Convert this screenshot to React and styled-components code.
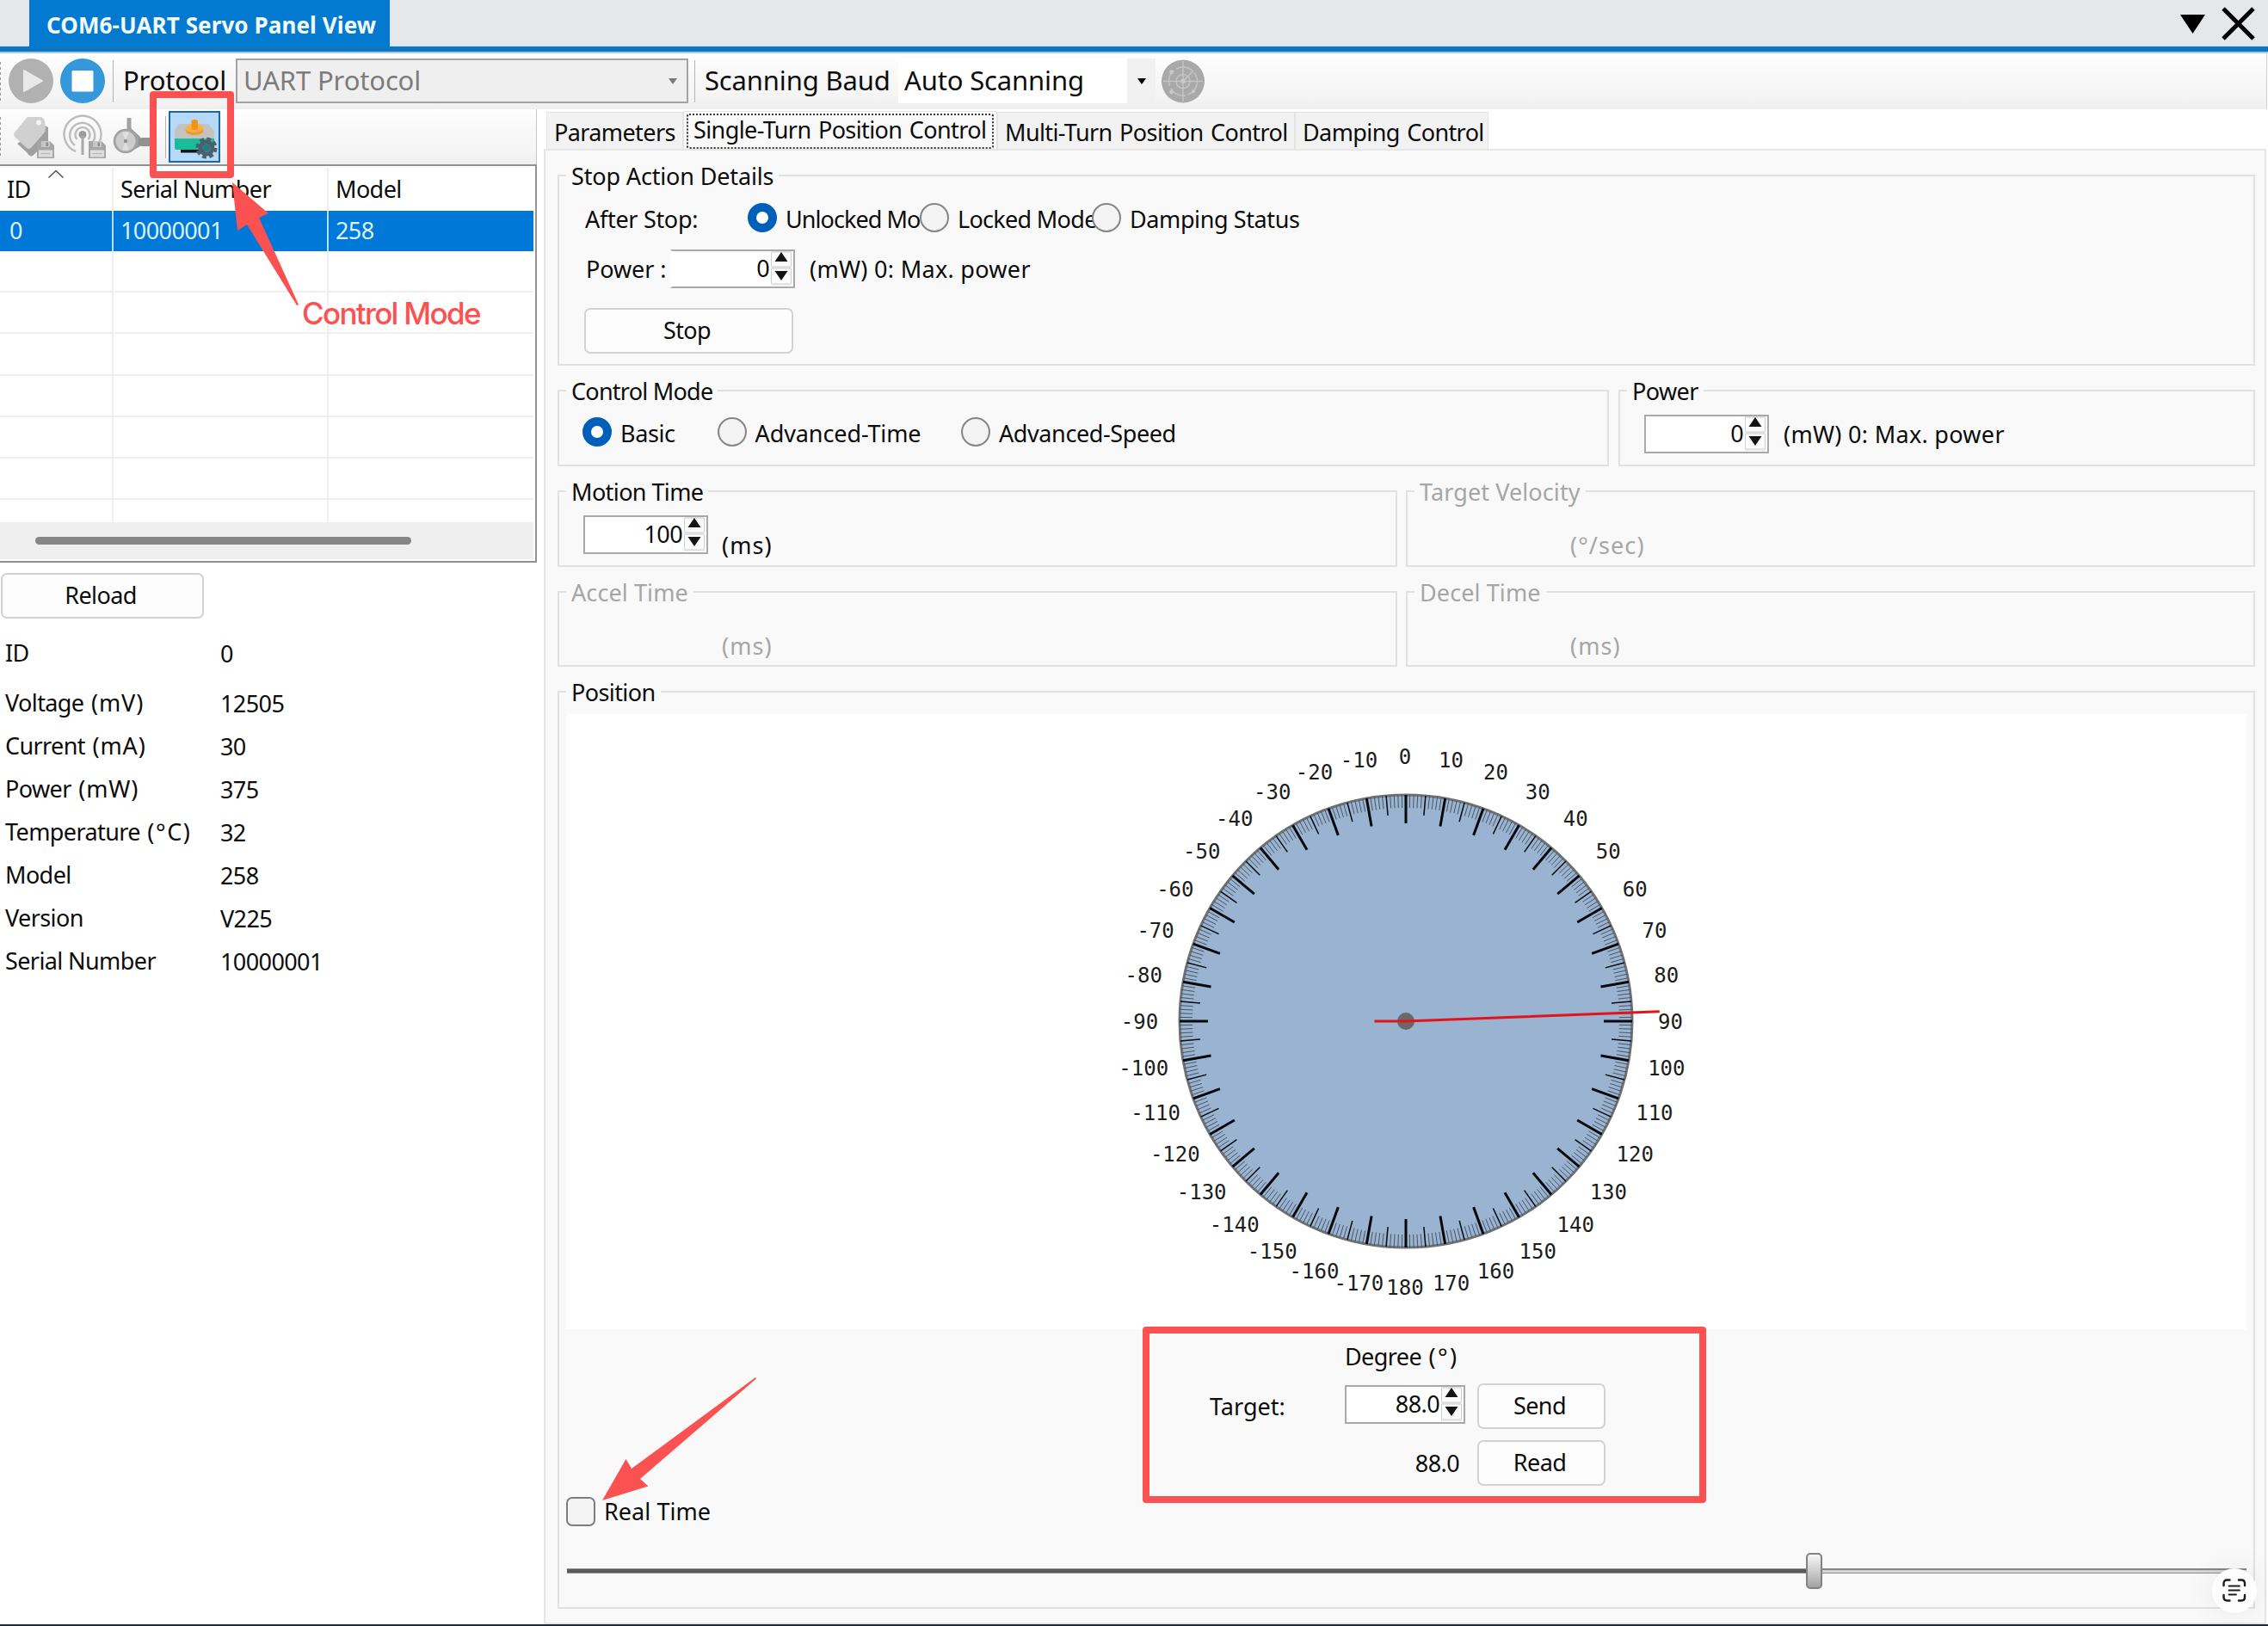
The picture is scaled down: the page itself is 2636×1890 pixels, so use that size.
import React from "react";
import styled, { createGlobalStyle } from "styled-components";

const GlobalStyle = createGlobalStyle`
  * {
    box-sizing: border-box;
  }

  body {
    margin: 0;
    background: #ffffff;
    color: #0c0c0c;
    font-family: "Noto Sans", "Open Sans", sans-serif;
    font-size: 27px;
    letter-spacing: -0.6px;
    line-height: 36px;
    white-space: nowrap;
  }
`;

const deviceInfo = [
  { label: "Voltage", unit: "(mV)", value: "12505" },
  { label: "Current", unit: "(mA)", value: "30" },
  { label: "Power", unit: "(mW)", value: "375" },
  { label: "Temperature", unit: "(°C)", value: "32", spacing: 1.6 },
  { label: "Model", value: "258" },
  { label: "Version", value: "V225" },
  { label: "Serial Number", value: "10000001" },
];

const CX = 976;
const CY = 357;

// point on the dial, 0 degrees at the top and clockwise
const polar = (deg, r) => {
  const a = (deg * Math.PI) / 180;
  return [CX + Math.sin(a) * r, CY - Math.cos(a) * r];
};

const Tick = ({ deg }) => {
  const major = deg % 10 === 0;
  const medium = deg % 5 === 0;
  const inner = major ? 230 : medium ? 240 : 248;
  const [x1, y1] = polar(deg, 263);
  const [x2, y2] = polar(deg, inner);
  return (
    <line
      x1={x1}
      y1={y1}
      x2={x2}
      y2={y2}
      stroke={major || medium ? "#05080c" : "#3f4b58"}
      strokeWidth={major ? 3 : medium ? 1.5 : 0.9}
    />
  );
};

const Dial = ({ value }) => {
  const ticks = Array.from({ length: 360 }, (_, i) => i);
  const labels = Array.from({ length: 36 }, (_, i) => (i - 17) * 10);
  const [nx, ny] = polar(value - 0.2, 295);
  return (
    <DialCanvas viewBox="0 0 1953 715">
      <circle cx={CX} cy={CY} r="263" fill="#99b3d1" stroke="#6f7275" strokeWidth="3" />
      {ticks.map((deg) => (
        <Tick key={deg} deg={deg} />
      ))}
      {labels.map((deg) => {
        const [x, y] = polar(deg, 308.5);
        return (
          <DialLabel key={deg} x={x - 1} y={y + 9}>
            {deg}
          </DialLabel>
        );
      })}
      <circle cx={CX} cy={CY} r="10" fill="#696969" />
      <path d={`M939.5 ${CY}H${CX}L${nx} ${ny}`} fill="none" stroke="#e3131b" strokeWidth="3" />
    </DialCanvas>
  );
};

const Spin = ({ value, width, open }) => (
  <SpinBox $width={width} $open={open}>
    <span>{value}</span>
    <SpinButtons viewBox="0 0 24 40">
      <rect x="0.5" y="1" width="23" height="17" rx="1" fill="#fbfbfb" stroke="#cfcfcf" />
      <rect x="0.5" y="20" width="23" height="18" rx="1" fill="#fbfbfb" stroke="#cfcfcf" />
      <path d="M12 1L19.5 12H4.5Z" fill="#141414" />
      <path d="M12 34L4.5 23H19.5Z" fill="#141414" />
    </SpinButtons>
  </SpinBox>
);

const Radio = ({ label, checked, width, spacing }) => (
  <RadioItem $width={width} $spacing={spacing}>
    <RadioDot $checked={checked} />
    <span>{label}</span>
  </RadioItem>
);

const PlayIcon = () => (
  <svg width="52" height="52" viewBox="0 0 52 52">
    <circle cx="26" cy="26" r="26" fill="#b1b1b1" />
    <path d="M18 14L39 26L18 38Z" fill="#e9e9e9" stroke="#e9e9e9" strokeWidth="2" strokeLinejoin="round" />
  </svg>
);

const StopIcon = () => (
  <svg width="52" height="52" viewBox="0 0 52 52">
    <circle cx="26" cy="26" r="26" fill="#3498db" />
    <rect x="13.5" y="14" width="25" height="24.5" rx="1.5" fill="#ffffff" />
  </svg>
);

const RadarIcon = () => (
  <svg width="50" height="51" viewBox="0 0 50 51">
    <circle cx="25" cy="25.5" r="25" fill="#a9a9a9" />
    <g fill="none" stroke="#c4c4c4" strokeWidth="1.5">
      <circle cx="25" cy="25.5" r="8" />
      <circle cx="25" cy="25.5" r="16.5" strokeDasharray="20 3" />
      <path d="M25 2V49M2 25.5H48M25 25.5L37 13" />
    </g>
    <g fill="#c9c9c9">
      <circle cx="25" cy="25.5" r="2.8" />
      <circle cx="11.5" cy="15" r="2.4" />
      <circle cx="11.5" cy="38" r="2.4" />
      <circle cx="37" cy="37" r="2" />
    </g>
  </svg>
);

const Floppy = ({ x, y }) => (
  <g transform={`translate(${x} ${y})`}>
    <path d="M0 0H15L20 5V20H0Z" fill="#a6a6a6" />
    <rect x="5" y="0" width="10" height="7" fill="#c6c6c6" />
    <rect x="10.5" y="1.5" width="2.5" height="4.5" fill="#8f8f8f" />
    <rect x="2" y="10.5" width="16" height="8" fill="#dddddd" />
    <path d="M4.5 14.5H15.5" stroke="#b8b8b8" strokeWidth="1.2" />
  </g>
);

const TagIcon = () => (
  <svg width="52" height="54" viewBox="14 134 52 54">
    <path d="M52 147L56 149V165L38 182Q35 184 31 178L20 168Z" fill="#a0a0a0" />
    <path
      d="M33 137L46 137Q51 137 52 142L53 150Q53 154 50 157L36 173Q34 175 31 173L18 161Q15 158 17 155L30 139Q31 137 33 137Z"
      fill="#d0d0d0"
    />
    <circle cx="45" cy="143.5" r="3" fill="#f4f4f4" />
    <Floppy x={43} y={165} />
  </svg>
);

const AntennaIcon = () => (
  <svg width="54" height="54" viewBox="72 134 54 54">
    <g fill="none" stroke="#bdbdbd" strokeWidth="2.5">
      <path d="M88 177A21.5 21.5 0 1 1 116 165" />
      <path d="M87 170A14.5 14.5 0 1 1 108 166" />
      <path d="M89.500 163A8.5 8.5 0 1 1 102.500 163" />
    </g>
    <circle cx="96" cy="157.5" r="4.5" fill="#9c9c9c" />
    <path d="M96 158V181" stroke="#a9a9a9" strokeWidth="3" />
    <Floppy x={103} y={165} />
  </svg>
);

const CaliperIcon = () => (
  <svg width="50" height="54" viewBox="130 134 50 54">
    <rect x="147.5" y="138" width="5" height="14" fill="#a3a3a3" />
    <path d="M152 150L163 160V171L152 177Z" fill="#9b9b9b" />
    <rect x="161" y="161" width="18" height="10" rx="4" fill="#929292" />
    <circle cx="146" cy="165" r="14.3" fill="#a2a2a2" />
    <circle cx="146" cy="165" r="11.5" fill="#cccccc" />
    <path d="M146 165L142 154.5L150 154.5Z M146 165L142 175.5L150 175.5Z" fill="#dfdfdf" />
    <circle cx="146" cy="165" r="2.2" fill="#8f8f8f" />
  </svg>
);

const ServoIcon = () => (
  <svg width="54" height="54" viewBox="199 132 54 54">
    <path d="M208 144H242L249 152V162H203V152Z" fill="#c5c3bf" />
    <path d="M203 161H249V172Q249 174 247 174H205Q203 174 203 172Z" fill="#1abc9c" />
    <rect x="210" y="174" width="27" height="3.5" fill="#101418" />
    <ellipse cx="226" cy="151.5" rx="10.5" ry="5.5" fill="#f09a2c" />
    <ellipse cx="226" cy="149" rx="10.5" ry="5" fill="#fbb04c" />
    <rect x="222.5" y="139" width="7.5" height="12" rx="2.5" fill="#f39312" />
    <circle cx="240" cy="172" r="10" fill="none" stroke="#4d5f6e" strokeWidth="5" strokeDasharray="4.6 3.254" />
    <circle cx="240" cy="172" r="7" fill="none" stroke="#4d5f6e" strokeWidth="5" />
    <circle cx="240" cy="172" r="4.5" fill="#2c7a7b" />
  </svg>
);

const ScanTextIcon = () => (
  <svg width="28" height="28" viewBox="0 0 28 28" fill="none" stroke="#1d1d1f" strokeLinecap="round">
    <path
      d="M1.5 8V5.5Q1.5 1.5 5.5 1.5H8.5M19 1.5H22Q26 1.5 26 5.5V8M26 19V21.5Q26 25.5 22 25.5H19M8.5 25.5H5.5Q1.5 25.5 1.5 21.5V19"
      strokeWidth="2.4"
    />
    <path d="M7.5 8.5H20M7.5 13.5H20M7.5 18.5H16" strokeWidth="1.8" />
  </svg>
);

const App = () => {
  return (
    <Window>
      <GlobalStyle />
      <TitleBar>
        <TitleTab>COM6-UART Servo Panel View</TitleTab>
        <WindowActions width="92" height="54" viewBox="0 0 92 54">
          <path d="M1 17H30L15.5 39Z" fill="#000000" />
          <path d="M51 10L86 45M86 10L51 45" stroke="#000000" strokeWidth="5" />
        </WindowActions>
      </TitleBar>

      <MainToolbar>
        <Grip />
        <PlayIcon />
        <StopIcon />
        <Separator />
        <ToolLabel $width={142}>Protocol</ToolLabel>
        <Combo $width={526} $disabled>
          <span>UART Protocol</span>
          <ComboArrow $disabled />
        </Combo>
        <Separator />
        <ToolLabel $width={236}>Scanning Baud</ToolLabel>
        <Combo $width={299}>
          <span>Auto Scanning</span>
          <ComboArrow />
        </Combo>
        <RadarIcon />
      </MainToolbar>

      <Body>
        <Sidebar>
          <SideToolbar>
            <Grip />
            <TagIcon />
            <AntennaIcon />
            <CaliperIcon />
            <Separator />
            <ActiveTool>
              <ServoIcon />
            </ActiveTool>
          </SideToolbar>

          <Table>
            <HeadRow>
              <Cell>
                ID
                <SortCaret viewBox="0 0 20 11">
                  <path d="M1.5 9.5L10 1.5L18.5 9.5" fill="none" stroke="#555555" strokeWidth="1.6" />
                </SortCaret>
              </Cell>
              <Cell>Serial Number</Cell>
              <Cell>Model</Cell>
            </HeadRow>
            <SelectedRow>
              <Cell>0</Cell>
              <Cell>10000001</Cell>
              <Cell>258</Cell>
            </SelectedRow>
            {[0, 1, 2, 3, 4, 5].map((i) => (
              <EmptyRow key={i}>
                <Cell />
                <Cell />
                <Cell />
              </EmptyRow>
            ))}
            <LastRow>
              <Cell />
              <Cell />
              <Cell />
            </LastRow>
            <ScrollTrack>
              <ScrollThumb />
            </ScrollTrack>
          </Table>

          <ReloadButton>Reload</ReloadButton>

          <InfoList>
            <InfoRow $height={58}>
              <span>ID</span>
              <InfoValue>0</InfoValue>
            </InfoRow>
            {deviceInfo.map(({ label, unit, value, spacing }) => (
              <InfoRow key={label}>
                <span>
                  {label} {unit && <InfoUnit $spacing={spacing}>{unit}</InfoUnit>}
                </span>
                <InfoValue>{value}</InfoValue>
              </InfoRow>
            ))}
          </InfoList>
        </Sidebar>

        <Main>
          <TabBar>
            <Tab $width={159}>Parameters</Tab>
            <Tab $width={365} $active>
              <TabFocus>Single-Turn Position Control</TabFocus>
            </Tab>
            <Tab $width={346}>Multi-Turn Position Control</Tab>
            <Tab $width={225}>Damping Control</Tab>
          </TabBar>

          <Pane>
            <Group $height={222}>
              <Legend $spacing={-0.15}>Stop Action Details</Legend>
              <StopRow>
                <StopLabel>After Stop:</StopLabel>
                <Radio label="Unlocked Mo" width={200} spacing={-0.95} checked />
                <Radio label="Locked Mode" width={200} spacing={-0.7} />
                <Radio label="Damping Status" width={260} spacing={-0.4} />
              </StopRow>
              <PowerRow>
                <PowerLabel>Power :</PowerLabel>
                <Spin value="0" width={145} open />
                <Unit>(mW) 0: Max. power</Unit>
              </PowerRow>
              <StopButton>Stop</StopButton>
            </Group>

            <GroupRow $columns="1222px 740px" $gap={11}>
              <Group $height={89}>
                <Legend $spacing={-0.75}>Control Mode</Legend>
                <ModeRow>
                  <Radio label="Basic" width={156.5} spacing={-0.4} checked />
                  <Radio label="Advanced-Time" width={283.5} spacing={-0.1} />
                  <Radio label="Advanced-Speed" width={300} spacing={-0.4} />
                </ModeRow>
              </Group>
              <Group $height={89}>
                <Legend>Power</Legend>
                <PowerField>
                  <Spin value="0" width={145} />
                  <Unit>(mW) 0: Max. power</Unit>
                </PowerField>
              </Group>
            </GroupRow>

            <GroupRow $columns="976px 987px" $gap={10}>
              <Group $height={89}>
                <Legend>Motion Time</Legend>
                <TimeField>
                  <SpinSlot>
                    <Spin value="100" width={145} />
                  </SpinSlot>
                  <LowUnit>(ms)</LowUnit>
                </TimeField>
              </Group>
              <Group $height={89} $disabled>
                <Legend $spacing={0.1}>Target Velocity</Legend>
                <TimeField>
                  <SpinSlot />
                  <LowUnit>(°/sec)</LowUnit>
                </TimeField>
              </Group>
            </GroupRow>

            <GroupRow $columns="976px 987px" $gap={10}>
              <Group $height={88} $disabled>
                <Legend $spacing={0.1}>Accel Time</Legend>
                <TimeField>
                  <SpinSlot />
                  <LowUnit>(ms)</LowUnit>
                </TimeField>
              </Group>
              <Group $height={88} $disabled>
                <Legend $spacing={0.1}>Decel Time</Legend>
                <TimeField>
                  <SpinSlot />
                  <LowUnit>(ms)</LowUnit>
                </TimeField>
              </Group>
            </GroupRow>

            <Group $height={1067}>
              <Legend>Position</Legend>
              <Dial value={88} />
              <TargetGrid>
                <DegreeTitle>
                  Degree <DegreeUnit>(°)</DegreeUnit>
                </DegreeTitle>
                <TargetLabel>Target:</TargetLabel>
                <Spin value="88.0" width={140} />
                <PushButton>Send</PushButton>
                <ReadValue>88.0</ReadValue>
                <PushButton>Read</PushButton>
              </TargetGrid>
              <RealTime>
                <Checkbox />
                Real Time
              </RealTime>
              <Slider>
                <SliderFill />
                <SliderThumb />
                <SliderRest />
              </Slider>
            </Group>
          </Pane>
        </Main>
      </Body>

      <ScanBadge>
        <ScanTextIcon />
      </ScanBadge>
      <ToolMarker />
      <TargetMarker />
      <Arrows viewBox="0 0 2636 1890">
        <path d="M270 212L312 248L301 253L347 354L345 355L287 261L276 268Z" />
        <path d="M700 1744L727.5 1696L734 1707L878 1601L879 1602.5L744 1719L753.5 1727.5Z" />
      </Arrows>
      <MarkerText>Control Mode</MarkerText>
    </Window>
  );
};

const Window = styled.div`
  position: relative;
  display: flex;
  flex-direction: column;
  width: 2636px;
  height: 1890px;
  overflow: hidden;
  background: #ffffff;
  border-bottom: 2px solid #222a33;
`;

const TitleBar = styled.header`
  display: flex;
  justify-content: space-between;
  height: 62px;
  padding-left: 34px;
  background: linear-gradient(#e6e7eb 52px, #c8e8fa 52px 54px, #1374bd 54px 60px, #9fcdee 60px);
`;

const TitleTab = styled.div`
  width: 419px;
  height: 56px;
  padding: 11px 0 0 20px;
  background: #037ad0;
  color: #f2fbff;
  font-size: 26px;
  font-weight: 700;
  letter-spacing: 0.1px;
`;

const WindowActions = styled.svg`
  margin-right: 11px;
`;

const MainToolbar = styled.div`
  display: flex;
  align-items: center;
  width: 2635px;
  height: 65px;
  background: linear-gradient(#ffffff, #f8f8f8 40%, #f5f5f5 75%, #efefef);
  border-right: 1px solid #d0d0d0;
  font-size: 31px;
  letter-spacing: -0.15px;

  svg {
    flex: none;
    margin-bottom: 1px;
  }

  svg:nth-of-type(2) {
    margin: 0 9px 1px 8px;
  }
`;

const Grip = styled.div`
  width: 1px;
  height: 46px;
  margin-right: 9px;
  background: repeating-linear-gradient(#9a9a9a 0 3px, transparent 3px 6px);
`;

const Separator = styled.div`
  flex: none;
  width: 1px;
  height: 49px;
  background: #b4b4b4;
`;

const ToolLabel = styled.span`
  flex: none;
  width: ${(p) => p.$width}px;
  padding: 0 0 3px 11px;
`;

const Combo = styled.div`
  display: flex;
  align-items: center;
  justify-content: space-between;
  flex: none;
  width: ${(p) => p.$width}px;
  height: 52px;
  padding-left: 7px;
  margin: 0 7px 1px 0;
  background: ${(p) => (p.$disabled ? "#efefef" : "#ffffff")};
  color: ${(p) => (p.$disabled ? "#7c7c7c" : "#0c0c0c")};
  border: ${(p) => (p.$disabled ? "2px solid #a3a3a3" : "none")};

  > span:first-child {
    padding-bottom: 2px;
  }
`;

const ComboArrow = styled.span`
  display: flex;
  align-items: center;
  justify-content: center;
  width: 33px;
  height: 100%;
  background: ${(p) => (p.$disabled ? "transparent" : "#f1f1f1")};

  &::before {
    content: "";
    border: 5px solid transparent;
    border-top: 7px solid ${(p) => (p.$disabled ? "#7a7a7a" : "#000000")};
    border-bottom: none;
  }
`;

const Body = styled.div`
  display: flex;
  flex: 1;
`;

const Sidebar = styled.aside`
  width: 632px;
`;

const SideToolbar = styled.div`
  display: flex;
  align-items: center;
  width: 624px;
  height: 64px;
  background: linear-gradient(#fefefe, #f8f8f8 40%, #f5f5f5 75%, #efefef);
  border-right: 1px solid #c8c8c8;

  svg {
    flex: none;
  }

  > svg {
    margin-top: 2px;
  }

  > svg:nth-of-type(1) {
    margin: 2px 6px 0 4px;
  }

  > svg:nth-of-type(3) {
    margin: 2px 12px 0 4px;
  }
`;

const ActiveTool = styled.div`
  display: flex;
  align-items: center;
  justify-content: center;
  width: 60px;
  height: 60px;
  margin-left: 3px;
  background: #b5d9f7;
  border: 2px solid #1668ad;
`;

const Table = styled.div`
  width: 624px;
  height: 463px;
  padding-right: 2px;
  border: 2px solid #929292;
  border-left: none;
  overflow: hidden;
`;

const Cell = styled.div`
  padding-left: 8px;
  border-right: 2px solid #efefef;

  &:last-child {
    border-right: none;
  }
`;

const Row = styled.div`
  display: grid;
  grid-template-columns: 132px 250px 1fr;
  height: 48.2px;
`;

const HeadRow = styled(Row)`
  height: 52px;
  padding-top: 2px;

  ${Cell} {
    display: flex;
    gap: 19px;
    padding-top: 7px;
  }
`;

const SelectedRow = styled(Row)`
  height: 47px;
  background: #0078d7;
  color: #dcf3ff;

  ${Cell} {
    padding-top: 5px;
    border-color: #b9defa;
  }

  ${Cell}:first-child {
    padding-left: 11px;
  }
`;

const EmptyRow = styled(Row)`
  border-bottom: 2px solid #efefef;
`;

const LastRow = styled(Row)`
  height: 26px;
`;

const SortCaret = styled.svg`
  width: 20px;
  height: 11px;
  margin-top: -5px;
`;

const ScrollTrack = styled.div`
  height: 43px;
  padding: 17px 0 0 41px;
  background: #efefef;
`;

const ScrollThumb = styled.div`
  width: 437px;
  height: 9px;
  border-radius: 5px;
  background: #868686;
`;

const PushButton = styled.button`
  display: block;
  width: 149px;
  height: 53px;
  padding: 0 4px 2px 0;
  background: #fdfdfd;
  color: #0c0c0c;
  border: 2px solid #d2d2d2;
  border-radius: 7px;
  font: inherit;
  letter-spacing: inherit;
`;

const ReloadButton = styled(PushButton)`
  width: 236px;
  margin: 12px 0 0 1px;
`;

const StopButton = styled(PushButton)`
  width: 243px;
  margin: 23px 0 0 29px;
`;

const InfoList = styled.div`
  padding: 22px 0 0 6px;
`;

const InfoRow = styled.div`
  display: grid;
  grid-template-columns: 250px 1fr;
  height: ${(p) => p.$height || 50}px;
`;

const InfoUnit = styled.span`
  margin-left: 2px;
  letter-spacing: ${(p) => p.$spacing || 0.9}px;
`;

const InfoValue = styled.span`
  padding-top: 1px;
`;

const Main = styled.main`
  display: flex;
  flex-direction: column;
  flex: 1;
`;

const TabBar = styled.div`
  display: flex;
  align-items: flex-end;
  height: 46px;
  padding-left: 3px;
  word-spacing: 2px;
`;

const Tab = styled.div`
  width: ${(p) => p.$width}px;
  height: ${(p) => (p.$active ? 46 : 43)}px;
  padding: ${(p) => (p.$active ? "2px 3px 0" : "5px 0 0 8px")};
  margin-bottom: ${(p) => (p.$active ? -2 : 0)}px;
  background: ${(p) => (p.$active ? "#f9f9f9" : "#f2f2f2")};
  border: 1px solid #e4e4e4;
  border-bottom: none;
`;

const TabFocus = styled.div`
  height: 41px;
  padding-left: 6px;
  border: 2px dotted #333333;
  border-radius: 3px;
  line-height: 34px;
`;

const Pane = styled.section`
  display: flex;
  flex-direction: column;
  gap: 28px;
  width: 2002px;
  height: 1715px;
  padding: 28px 0 0 14px;
  background: #f9f9f9;
  border: 2px solid #e6e6e6;
`;

const Legend = styled.div`
  align-self: flex-start;
  margin: -19px 0 0 8px;
  padding: 2px 6px 0;
  background: #f9f9f9;
  line-height: 34px;
  letter-spacing: ${(p) => p.$spacing || -0.6}px;
`;

const Group = styled.div`
  display: flex;
  flex-direction: column;
  height: ${(p) => p.$height}px;
  border: 2px solid #e1e1e1;
  color: ${(p) => (p.$disabled ? "#a6a6a6" : "inherit")};

  ${Pane} > & {
    width: 1973px;
  }
`;

const GroupRow = styled.div`
  display: grid;
  grid-template-columns: ${(p) => p.$columns};
  gap: ${(p) => p.$gap}px;
`;

const FieldRow = styled.div`
  display: flex;
  align-items: center;
`;

const StopRow = styled(FieldRow)`
  margin: 14px 0 0 30px;
`;

const StopLabel = styled.span`
  width: 189px;
  padding-top: 2px;
  line-height: 34px;
  letter-spacing: -0.3px;
`;

const RadioItem = styled.div`
  display: flex;
  align-items: center;
  flex: none;
  gap: 10px;
  width: ${(p) => p.$width}px;
  letter-spacing: ${(p) => p.$spacing}px;

  span {
    padding-top: 2px;
    line-height: 34px;
  }
`;

const RadioDot = styled.i`
  flex: none;
  width: 34px;
  height: 34px;
  margin-bottom: 2px;
  border-radius: 50%;
  background: ${(p) => (p.$checked ? "#ffffff" : "#f3f3f3")};
  border: ${(p) => (p.$checked ? "10px solid #005fb8" : "2px solid #858585")};
`;

const PowerRow = styled(FieldRow)`
  margin: 18px 0 0 31px;
`;

const PowerLabel = styled.span`
  width: 98px;
  letter-spacing: -0.1px;
`;

const SpinBox = styled.div`
  display: flex;
  align-items: center;
  justify-content: flex-end;
  flex: none;
  gap: 2px;
  width: ${(p) => p.$width}px;
  height: 45px;
  padding: 0 2px 2px 0;
  background: #ffffff;
  border: 2px solid #a9a9a9;
  border-left-color: ${(p) => (p.$open ? "#ffffff" : "#a9a9a9")};
`;

const SpinButtons = styled.svg`
  width: 24px;
  height: 40px;
  background: #efefef;
`;

const Unit = styled.span`
  padding: 1px 0 0 17px;
  letter-spacing: 0.3px;
`;

const ModeRow = styled(FieldRow)`
  margin: 13px 0 0 27px;
`;

const PowerField = styled(FieldRow)`
  margin: 10px 0 0 28px;
`;

const TimeField = styled(FieldRow)`
  height: 45px;
  margin: 10px 0 0 28px;
  align-items: flex-end;
`;

const SpinSlot = styled.div`
  width: 145px;
  height: 45px;
`;

const LowUnit = styled.span`
  padding-left: 16px;
  margin-bottom: -8px;
  letter-spacing: 1.1px;
`;

const DialCanvas = styled.svg`
  flex: none;
  width: 1953px;
  height: 715px;
  margin: 8px 0 0 8px;
  background: #ffffff;
`;

const DialLabel = styled.text`
  font-family: "DejaVu Sans Mono", monospace;
  font-size: 24px;
  letter-spacing: 0;
  text-anchor: middle;
  fill: #1c1c1c;
`;

const TargetGrid = styled.div`
  display: grid;
  grid-template-columns: 157px 140px 149px;
  grid-template-rows: 36px 53px 53px;
  row-gap: 13px;
  margin: 14px 0 0 756px;

  ${PushButton} {
    grid-column: 3;
    margin-left: 14px;
  }
`;

const DegreeTitle = styled.span`
  grid-column: 2 / 4;
`;

const DegreeUnit = styled.span`
  margin-left: 2px;
  letter-spacing: 2.4px;
`;

const TargetLabel = styled.span`
  grid-column: 1;
  padding-top: 9px;
  letter-spacing: 0;

  & + div {
    margin-top: 2px;
  }
`;

const ReadValue = styled.span`
  grid-column: 2;
  justify-self: end;
  padding: 9px 7px 0 0;
`;

const RealTime = styled.label`
  display: flex;
  align-items: center;
  gap: 10px;
  height: 34px;
  margin: 13px 0 0 8px;
  letter-spacing: 0.05px;
`;

const Checkbox = styled.span`
  width: 34px;
  height: 34px;
  border: 2px solid #7d7d7d;
  border-radius: 7px;
  background: #f3f3f3;
`;

const Slider = styled.div`
  display: flex;
  align-items: center;
  margin: 31px 0 0 9px;
`;

const SliderFill = styled.div`
  width: 1440px;
  height: 6px;
  background: #5a5a5a;
  border-top: 1px solid #8f8f8f;
  border-bottom: 1px solid #8f8f8f;
`;

const SliderThumb = styled.div`
  width: 19px;
  height: 42px;
  border: 2px solid #828282;
  border-radius: 5px;
  background: linear-gradient(#f6f6f6, #a4a4a4);
`;

const SliderRest = styled.div`
  width: 493px;
  height: 6px;
  background: #d4d4d4;
  border-top: 2px solid #858585;
  border-bottom: 1px solid #8f8f8f;
`;

const ScanBadge = styled.div`
  position: absolute;
  right: 13px;
  bottom: 13px;
  display: flex;
  align-items: center;
  justify-content: center;
  width: 52px;
  height: 52px;
  border-radius: 50%;
  background: #fefefe;
  box-shadow: 0 0 36px rgba(0, 0, 0, 0.07);
`;

const Marker = styled.div`
  position: absolute;
  border: 8px solid #fb5151;
  border-radius: 4px;
`;

const ToolMarker = styled(Marker)`
  left: 174px;
  top: 106px;
  width: 98px;
  height: 101px;
`;

const TargetMarker = styled(Marker)`
  left: 1328px;
  top: 1542px;
  width: 655px;
  height: 205px;
`;

const Arrows = styled.svg`
  position: absolute;
  left: 0;
  top: 0;
  width: 2636px;
  height: 1890px;
  fill: #fb5151;
`;

const MarkerText = styled.div`
  position: absolute;
  left: 351px;
  top: 343px;
  color: #fb5151;
  font-family: Inter, "Liberation Sans", sans-serif;
  font-size: 35px;
  font-weight: 500;
  line-height: 42px;
  letter-spacing: -1.7px;
`;

export default App;
